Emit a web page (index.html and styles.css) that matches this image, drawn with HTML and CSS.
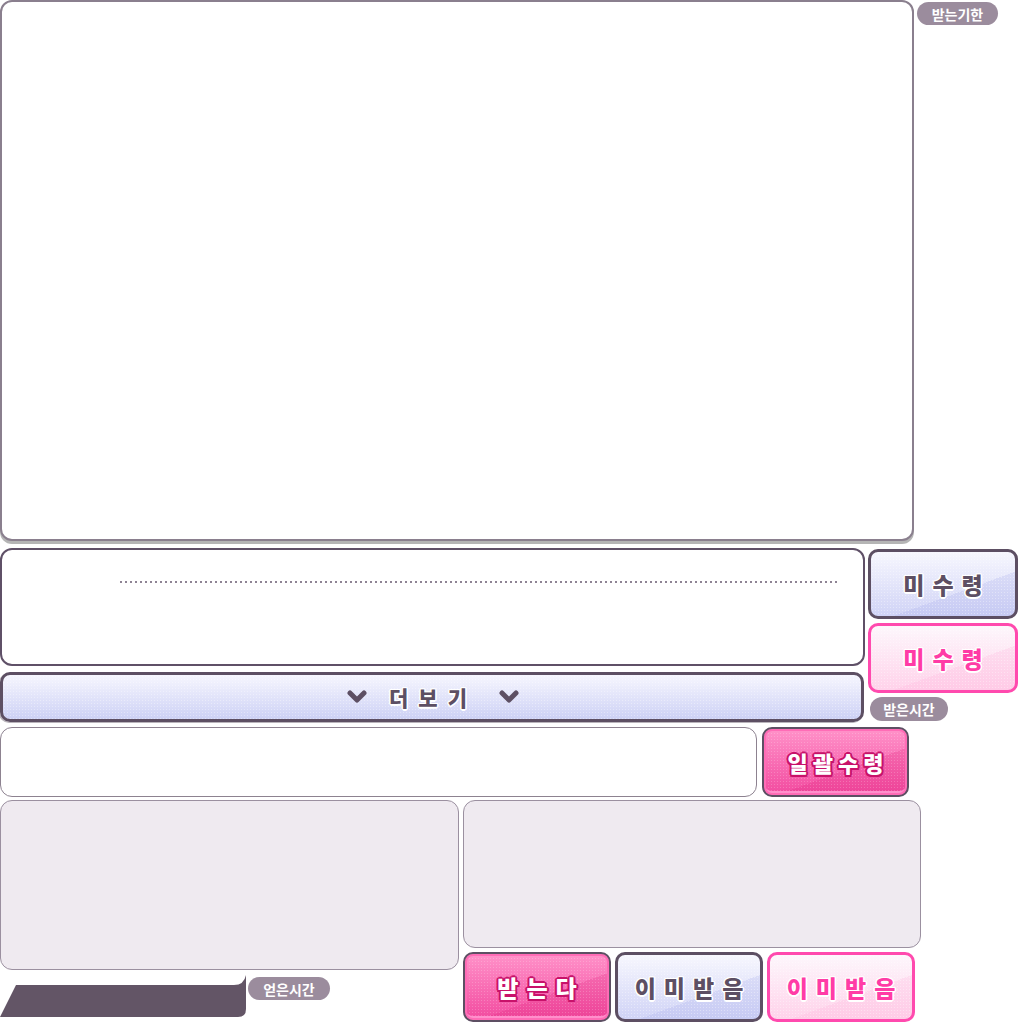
FILE: index.html
```html
<!DOCTYPE html>
<html lang="ko">
<head>
    <meta charset="UTF-8">
    <meta name="viewport" content="width=device-width, initial-scale=1.0">
    <title>우편함</title>
    <link rel="stylesheet" href="styles.css">
</head>
<body>
    <div class="page">
        <div class="row row-top">
            <section class="panel panel-main"></section>
            <span class="tag tag-deadline">받는기한</span>
        </div>

        <div class="row row-mid">
            <div class="col-left">
                <section class="panel panel-info">
                    <div class="dots"></div>
                </section>
                <button class="more">
                    <svg class="chev" viewBox="0 0 22 14" width="22" height="14"><polyline points="4,3 11,10 18,3"/></svg>
                    <span class="more-label">더보기</span>
                    <svg class="chev" viewBox="0 0 22 14" width="22" height="14"><polyline points="4,3 11,10 18,3"/></svg>
                </button>
            </div>
            <div class="col-right">
                <button class="btn btn-lav btn-side">미수령</button>
                <button class="btn btn-line btn-side">미수령</button>
                <span class="tag tag-time">받은시간</span>
            </div>
        </div>

        <div class="row row-bulk">
            <section class="panel panel-plain"></section>
            <button class="btn btn-pink btn-bulk">일괄수령</button>
        </div>

        <div class="row row-bottom">
            <div class="col-soft-left">
                <section class="panel panel-soft panel-soft-left"></section>
                <div class="foot">
                    <div class="slab"></div>
                    <span class="tag tag-got">얻은시간</span>
                </div>
            </div>
            <div class="col-soft-right">
                <section class="panel panel-soft panel-soft-right"></section>
                <div class="actions">
                    <button class="btn btn-pink btn-act">받는다</button>
                    <button class="btn btn-lav btn-act">이미받음</button>
                    <button class="btn btn-line btn-act">이미받음</button>
                </div>
            </div>
        </div>
    </div>
</body>
</html>
```

FILE: styles.css
```css
* {
    margin: 0;
    padding: 0;
    box-sizing: border-box;
}

body {
    width: 1024px;
    height: 1024px;
    background: #fff;
    font-family: "Noto Sans CJK KR", "Noto Sans", sans-serif;
    overflow: hidden;
}

.page {
    display: flex;
    flex-direction: column;
}

.row {
    display: flex;
    align-items: flex-start;
}

/* panels */
.panel {
    background: #fff;
    border-radius: 12px;
}

.panel-main {
    width: 914px;
    height: 541px;
    border: 2px solid #8a7f8e;
    box-shadow: 0 3px 0 #b5b5b5;
}

.row-mid {
    margin-top: 7px;
}

.col-left {
    display: flex;
    flex-direction: column;
}

.panel-info {
    width: 865px;
    height: 118px;
    border: 2px solid #5f5067;
    padding: 31px 0 0 118px;
}

.dots {
    width: 718px;
    height: 2px;
    background: repeating-linear-gradient(to right, #8e8394 0 2px, transparent 2px 5px);
}

.more {
    width: 864px;
    height: 50px;
    margin-top: 6px;
    border: 3px solid #5d4f63;
    border-radius: 10px;
    background:
        radial-gradient(rgba(255, 255, 255, 0.35) 0.7px, transparent 0.9px) 0 0 / 3px 3px,
        linear-gradient(#f6f6fe, #cdd1f5);
    box-shadow: -1px 1px 0 #b9b4bb;
    display: flex;
    align-items: center;
    justify-content: center;
    gap: 21px;
    padding-left: 2px;
    font-family: inherit;
}

.more-label {
    font-size: 21px;
    font-weight: 900;
    color: #5d4f63;
    letter-spacing: 10px;
    text-shadow: -1.5px 0 #fff, 1.5px 0 #fff, 0 -1.5px #fff, 0 1.5px #fff,
        -1px -1px #fff, 1px 1px #fff, -1px 1px #fff, 1px -1px #fff;
}

.chev polyline {
    fill: none;
    stroke: #5d4f63;
    stroke-width: 5;
    stroke-linecap: round;
    stroke-linejoin: round;
}

.col-right {
    display: flex;
    flex-direction: column;
    margin-left: 3px;
    padding-top: 1px;
}

/* buttons */
.btn {
    display: flex;
    align-items: center;
    justify-content: center;
    border-radius: 10px;
    font-family: inherit;
    font-weight: 900;
    font-size: 23px;
    letter-spacing: 8px;
    text-indent: 8px;
}

.btn-lav {
    border: 3px solid #5d4f63;
    color: #5d4f63;
    background:
        radial-gradient(rgba(255, 255, 255, 0.35) 0.7px, transparent 0.9px) 0 0 / 3px 3px,
        linear-gradient(160deg, transparent 62%, rgba(170, 175, 235, 0.25) 62%),
        linear-gradient(#f7f7fe, #d0d3f6);
    text-shadow: -1.5px 0 #fff, 1.5px 0 #fff, 0 -1.5px #fff, 0 1.5px #fff,
        -1px -1px #fff, 1px 1px #fff, -1px 1px #fff, 1px -1px #fff;
}

.btn-line {
    border: 3px solid #ff4aae;
    color: #ff3ca6;
    background:
        radial-gradient(rgba(255, 255, 255, 0.35) 0.7px, transparent 0.9px) 0 0 / 3px 3px,
        linear-gradient(160deg, transparent 62%, rgba(255, 180, 220, 0.25) 62%),
        linear-gradient(#fdf7fc, #ffd2ea);
    text-shadow: -1.5px 0 #fff, 1.5px 0 #fff, 0 -1.5px #fff, 0 1.5px #fff,
        -1px -1px #fff, 1px 1px #fff, -1px 1px #fff, 1px -1px #fff;
}

.btn-pink {
    border: 2px solid #5d4f63;
    color: #fff;
    background:
        radial-gradient(rgba(255, 255, 255, 0.2) 0.7px, transparent 0.9px) 0 0 / 3px 3px,
        linear-gradient(160deg, transparent 60%, rgba(220, 30, 120, 0.2) 60%),
        linear-gradient(#ff92c9, #f24a9f);
    box-shadow: inset 0 0 0 2px #ff6cb6, inset 0 -4px 0 #ff8fcb;
    text-shadow: -2px 0 #c8126a, 2px 0 #c8126a, 0 -2px #c8126a, 0 2px #c8126a,
        -1.5px -1.5px #c8126a, 1.5px 1.5px #c8126a, -1.5px 1.5px #c8126a, 1.5px -1.5px #c8126a;
}

.btn-side {
    width: 150px;
    height: 70px;
}

.btn-side + .btn-side {
    margin-top: 4px;
}

/* tags */
.tag {
    display: flex;
    align-items: center;
    justify-content: center;
    height: 23px;
    border-radius: 12px;
    background: #9b8c9d;
    color: #fff;
    font-size: 14px;
    font-weight: 700;
}

.tag-deadline {
    width: 81px;
    margin: 2px 0 0 3px;
}

.tag-time {
    width: 78px;
    height: 24px;
    margin: 4px 0 0 2px;
}

.tag-got {
    width: 82px;
    margin: 2px 0 0 2px;
}

.row-bulk {
    margin-top: 5px;
}

.panel-plain {
    width: 757px;
    height: 70px;
    border: 1.5px solid #8d8290;
}

.btn-bulk {
    width: 147px;
    height: 70px;
    margin-left: 5px;
    font-size: 22px;
    letter-spacing: 5px;
    text-indent: 5px;
}

.row-bottom {
    margin-top: 3px;
}

.panel-soft {
    background: #efeaf0;
    border: 1.5px solid #9b90a0;
}

.panel-soft-left {
    width: 459px;
    height: 170px;
}

.foot {
    display: flex;
    align-items: flex-start;
    margin-top: 5px;
}

.slab {
    width: 246px;
    height: 42px;
    background: #635566;
    clip-path: path("M 16 10 L 234 10 Q 244 10 246 0 L 246 34 Q 246 42 238 42 L 0 42 Z");
}

.col-soft-right {
    margin-left: 4px;
}

.panel-soft-right {
    width: 458px;
    height: 148px;
}

.actions {
    display: flex;
    gap: 4px;
    margin-top: 4px;
}

.btn-act {
    width: 148px;
    height: 70px;
}
```
